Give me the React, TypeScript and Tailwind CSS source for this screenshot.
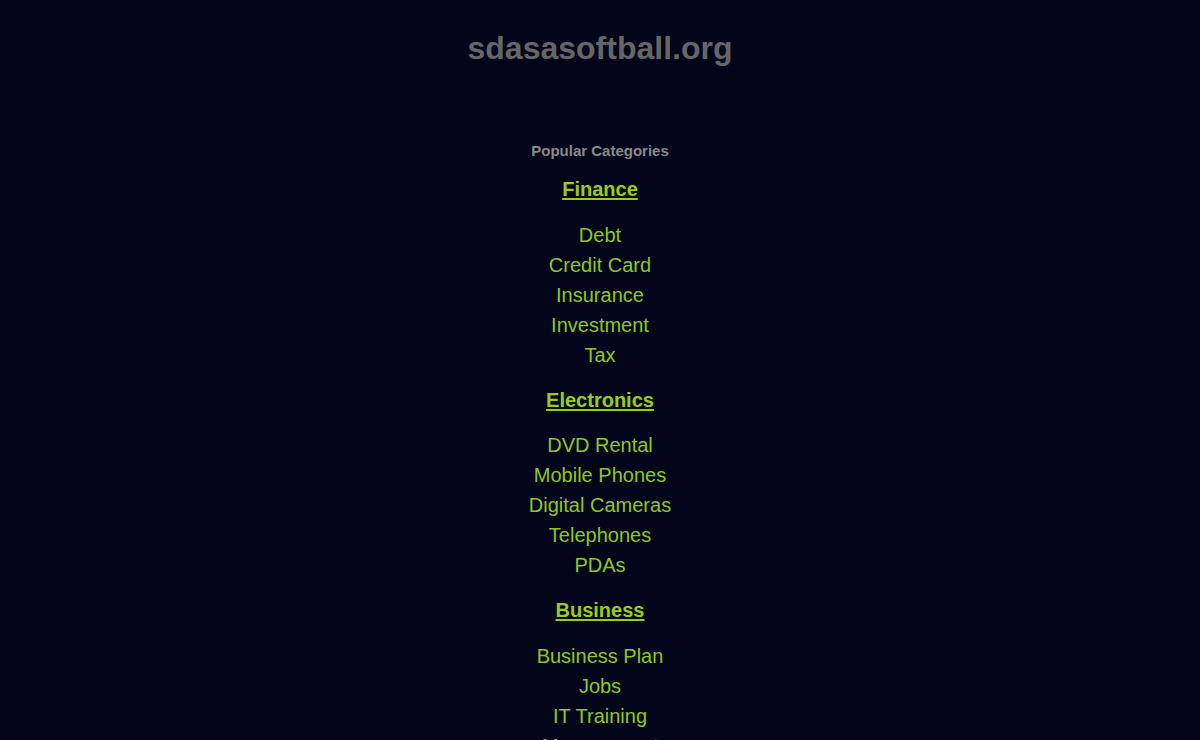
const categories = [
  { title: 'Finance', items: ['Debt', 'Credit Card', 'Insurance', 'Investment', 'Tax'] },
  { title: 'Electronics', items: ['DVD Rental', 'Mobile Phones', 'Digital Cameras', 'Telephones', 'PDAs'] },
  { title: 'Business', items: ['Business Plan', 'Jobs', 'IT Training', 'Management', 'Marketing'] },
];

export default function App() {
  return (
    <div className="min-h-screen bg-[#03051a] text-center font-['Liberation_Sans',Arial,sans-serif] pt-[30px] pb-10">
      <h1 className="text-[32px] leading-[36px] font-bold text-[#666666]">sdasasoftball.org</h1>

      <div className="mt-[76px] text-[15px] leading-[18px] font-bold text-[#8a8a8a]">Popular Categories</div>

      <div className="mt-[17px] flex flex-col items-center">
        {categories.map((cat, i) => (
          <div key={cat.title} className={i > 0 ? 'mt-[18px]' : ''}>
            <a href="#" className="block text-[20px] leading-[24px] font-bold text-[#9acd14] underline underline-offset-2">
              {cat.title}
            </a>
            <ul className="mt-[18.6px]">
              {cat.items.map((item) => (
                <li key={item}>
                  <a href="#" className="text-[20px] leading-[30px] text-[#8fc81c]">
                    {item}
                  </a>
                </li>
              ))}
            </ul>
          </div>
        ))}
      </div>
    </div>
  );
}
